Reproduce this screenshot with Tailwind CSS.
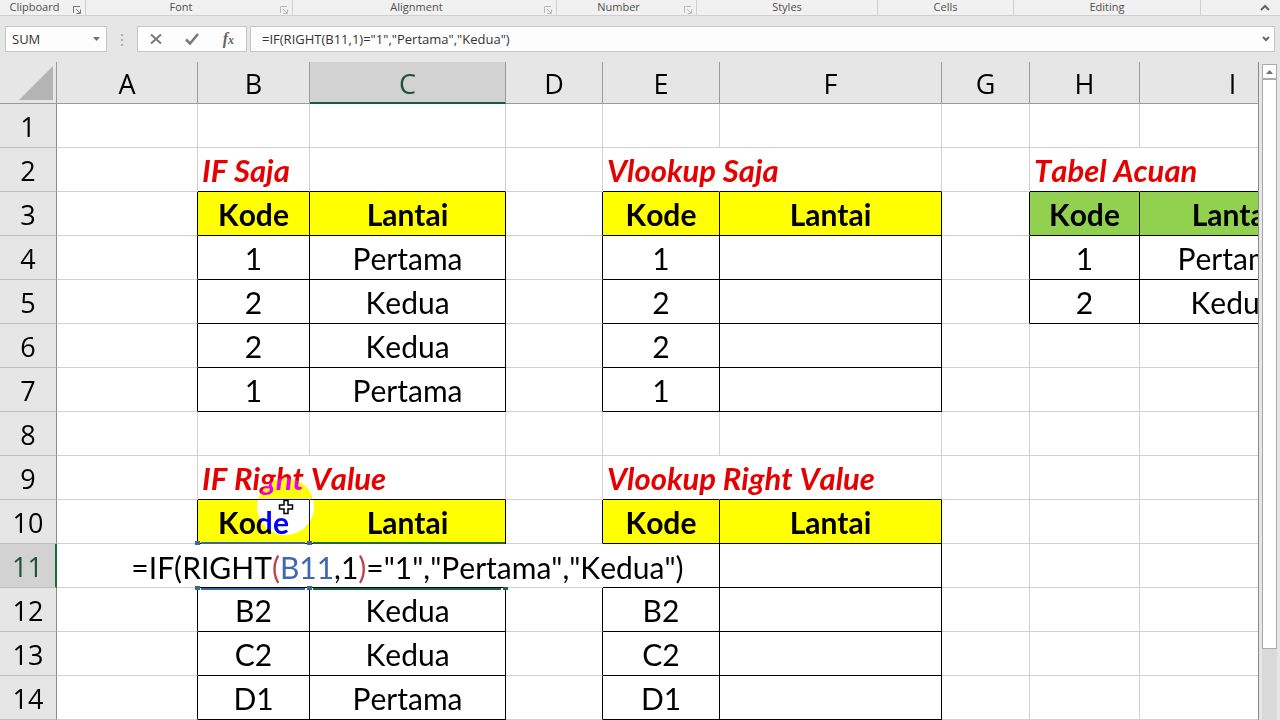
<!DOCTYPE html>
<html lang="id">
<head>
<meta charset="utf-8">
<title>Spreadsheet</title>
<script src="https://cdn.jsdelivr.net/npm/@tailwindcss/browser@4"></script>
</head>
<body class="flex h-screen flex-col overflow-hidden bg-[#e6e6e6] font-['Open_Sans',sans-serif] text-black [font-kerning:none]">

<header class="flex h-4 shrink-0 border-b border-[#d0d0d0] bg-[#f1f1f1] text-[11px] leading-[14px] text-[#505050]">
  <div class="flex w-[86px] border-r border-[#d0d0d0]"><span class="flex-1 pr-1 text-center">Clipboard</span><button aria-label="Clipboard settings" class="mt-1 w-3 text-[#777]"><svg class="size-2" viewBox="0 0 8 8" fill="none" stroke="currentColor"><path d="M.5 7V.5H7M3 3l4 4M7.500 3.500v4h-4"/></svg></button></div>
  <div class="flex w-[207px] border-r border-[#d0d0d0]"><span class="flex-1 pr-1 text-center">Font</span><button aria-label="Font settings" class="mt-1 w-3 text-[#bbb]"><svg class="size-2" viewBox="0 0 8 8" fill="none" stroke="currentColor"><path d="M.5 7V.5H7M3 3l4 4M7.500 3.500v4h-4"/></svg></button></div>
  <div class="flex w-[264px] border-r border-[#d0d0d0]"><span class="flex-1 pr-1 text-center">Alignment</span><button aria-label="Alignment settings" class="mt-1 w-3 text-[#bbb]"><svg class="size-2" viewBox="0 0 8 8" fill="none" stroke="currentColor"><path d="M.5 7V.5H7M3 3l4 4M7.500 3.500v4h-4"/></svg></button></div>
  <div class="flex w-[140px] border-r border-[#d0d0d0]"><span class="flex-1 pr-1 text-center">Number</span><button aria-label="Number settings" class="mt-1 w-3 text-[#bbb]"><svg class="size-2" viewBox="0 0 8 8" fill="none" stroke="currentColor"><path d="M.5 7V.5H7M3 3l4 4M7.500 3.500v4h-4"/></svg></button></div>
  <div class="w-[181px] border-r border-[#d0d0d0] text-center">Styles</div>
  <div class="w-[136px] border-r border-[#d0d0d0] text-center">Cells</div>
  <div class="w-[187px] border-r border-[#d0d0d0] text-center">Editing</div>
  <button aria-label="Collapse ribbon" class="mr-2.5 ml-auto text-[#666]"><svg class="h-2 w-2.5" viewBox="0 0 10 8" fill="none" stroke="currentColor" stroke-width="2"><path d="M1 6l4-4 4 4"/></svg></button>
</header>

<div class="flex h-[46px] shrink-0 items-start px-[5px] pt-2.5 text-[#333]">
  <div class="flex h-[26px] w-[102px] items-center border border-[#c6c6c6] bg-[#fdfdfd] px-1.5">
    <input aria-label="Name box" value="SUM" class="w-0 min-w-0 flex-1 text-[13px] leading-6 outline-none">
    <button aria-label="Name list"><svg class="h-1 w-[7px]" viewBox="0 0 7 4" fill="#707070"><path d="M0 0h7L3.500 4z"/></svg></button>
  </div>
  <svg class="mt-2 ml-3.5 h-3 w-0.5" viewBox="0 0 2 12" fill="#b0b0b0"><path d="M0 0h2v2H0zM0 5h2v2H0zM0 10h2v2H0z"/></svg>
  <div class="ml-3.5 flex h-[26px] w-[110px] items-center justify-between border border-[#c6c6c6] bg-[#fdfdfd] px-3 text-[#7a7a7a]">
    <button aria-label="Cancel"><svg class="size-3" viewBox="0 0 12 12" fill="none" stroke="currentColor" stroke-width="2"><path d="M1 1.500l10 9M11 1.500l-10 9"/></svg></button>
    <button aria-label="Enter"><svg class="h-3 w-3.5" viewBox="0 0 14 12" fill="none" stroke="currentColor" stroke-width="2.600"><path d="M1 6.500l4 4L13 1"/></svg></button>
    <button aria-label="Insert function" class="font-['Liberation_Serif',serif] text-base leading-5 font-bold text-[#666] italic">f<span class="text-xs">x</span></button>
  </div>
  <div class="ml-[3px] flex h-[26px] min-w-0 flex-1 items-center border border-[#c6c6c6] bg-[#fdfdfd] pr-1 pl-[11px]">
    <input aria-label="Formula bar" value='=IF(RIGHT(B11,1)="1","Pertama","Kedua")' class="w-0 min-w-0 flex-1 text-[13px] leading-6 outline-none">
    <button aria-label="Expand formula bar"><svg class="h-1.5 w-2" viewBox="0 0 8 6" fill="none" stroke="#666" stroke-width="2"><path d="M1 1l3 3 3-3"/></svg></button>
  </div>
</div>

<main class="flex min-h-0 flex-1">
  <div class="relative isolate min-w-0 flex-1 overflow-hidden border-r border-[#8a8a8a] bg-white">
    <table class="w-[1326px] table-fixed border-separate border-spacing-0 text-center">
      <colgroup>
        <col class="w-[57px]"><col class="w-[141px]"><col class="w-[112px]"><col class="w-[196px]"><col class="w-[97px]"><col class="w-[117px]"><col class="w-[222px]"><col class="w-[88px]"><col class="w-[110px]"><col class="w-[186px]">
      </colgroup>
      <thead><tr id="heads"></tr></thead>
      <tbody id="rows"></tbody>
    </table>
    <div class="pointer-events-none absolute top-[416px] left-[257px] size-[57px] rounded-full bg-[#0000ff] mix-blend-difference"></div>
    <svg class="pointer-events-none absolute top-[437px] left-[278px] size-4" viewBox="0 0 16 16" fill="white" stroke="black" stroke-width="1.500"><path d="M6 1.500h4V6h4.500v4H10v4.500H6V10H1.500V6H6z"/></svg>
  </div>
  <div class="ml-[3px] flex w-[18px] flex-col pt-0.5">
    <button aria-label="Scroll up" class="flex h-[15px] w-[15px] shrink-0 items-center justify-center border border-[#ababab] bg-white"><svg class="h-1 w-[7px]" viewBox="0 0 7 4" fill="#707070"><path d="M0 4h7L3.500 0z"/></svg></button>
    <div class="w-[15px] flex-1 bg-[#dadada]"><div class="h-[89%] border border-[#ababab] bg-white"></div></div>
  </div>
</main>

<script>
const cols = 'ABCDEFGHI';
const cells = {
  B2: 'IF Saja', E2: 'Vlookup Saja', H2: 'Tabel Acuan', B9: 'IF Right Value', E9: 'Vlookup Right Value',
  B3: 'Kode', C3: 'Lantai', E3: 'Kode', F3: 'Lantai', H3: 'Kode', I3: 'Lantai',
  B4: '1', C4: 'Pertama', B5: '2', C5: 'Kedua', B6: '2', C6: 'Kedua', B7: '1', C7: 'Pertama',
  E4: '1', E5: '2', E6: '2', E7: '1', H4: '1', I4: 'Pertama', H5: '2', I5: 'Kedua',
  B10: 'Kode', C10: 'Lantai', E10: 'Kode', F10: 'Lantai',
  B12: 'B2', C12: 'Kedua', B13: 'C2', C13: 'Kedua', B14: 'D1', C14: 'Pertama',
  E12: 'B2', E13: 'C2', E14: 'D1'
};
const editor = `<span class="absolute top-px left-1/2 z-10 -translate-x-1/2 leading-[44px] whitespace-nowrap">=IF(RIGHT<span class="text-[#c0404a]">(</span><span class="text-[#4066b4]">B11</span>,1<span class="text-[#c0404a]">)</span>="1","Pertama","Kedua")</span>
<span class="absolute -top-0.5 right-0 left-[3px] z-20 h-0.5 bg-[#1a6840]"></span>
<span class="absolute right-1 -bottom-[3px] left-[3px] z-20 h-0.5 bg-[#1a6840]"></span>
<span class="absolute -right-[3px] -bottom-[3px] z-20 h-[3px] w-[5px] bg-[#1a6840]"></span>`;
const reference = `<span class="absolute -top-0.5 right-1 left-[3px] z-20 h-0.5 bg-[#3a66a8]"></span>
<span class="absolute right-1 -bottom-[3px] left-[3px] z-20 h-0.5 bg-[#3a66a8]"></span>
<span class="absolute -top-[3px] -left-[3px] z-20 h-1 w-[5px] bg-[#3a66a8]"></span>
<span class="absolute -top-[3px] -right-[3px] z-20 h-1 w-[5px] bg-[#3a66a8]"></span>
<span class="absolute -bottom-[3px] -left-[3px] z-20 h-1 w-[5px] bg-[#3a66a8]"></span>
<span class="absolute -right-[3px] -bottom-[3px] z-20 h-1 w-[5px] bg-[#3a66a8]"></span>`;

// Columns and rows that belong to a bordered table
const boxed = (c, r) =>
  ('BCEF'.includes(c) && ((r >= 3 && r <= 7) || r >= 10)) || ('HI'.includes(c) && r >= 3 && r <= 5);
// Cells whose right grid line is covered by text running into the next cell
const open = new Set(['B9', 'E2', 'E9', 'H2', 'A11', 'B11', 'C11', 'D11']);

document.getElementById('heads').innerHTML =
  '<th class="h-[42px] border-r border-b border-[#9b9b9b] bg-[#e6e6e6] p-0 align-top"><svg class="mt-1 ml-[19px] h-[34px] w-[34px]" viewBox="0 0 34 34" fill="#b4b4b4"><path d="M34 0v34H0z"/></svg></th>' +
  [...cols].map(c => `<th scope="col" class="h-[42px] border-r px-0 pt-1 pb-0 align-top text-[27px] leading-9 font-normal ${c === 'C'
    ? 'border-b-2 border-r-[#9b9b9b] border-b-[#12603a] bg-[#d2d2d2] text-[#1c5236]'
    : 'border-b border-[#9b9b9b] bg-[#e6e6e6]'}">${c}</th>`).join('');

let html = '';
for (let r = 1; r <= 14; r++) {
  html += `<tr><th scope="row" class="h-11 border-b px-0 pt-0.5 pb-0 text-[27px] leading-[41px] font-normal ${r === 11
    ? 'border-r-2 border-b-[#bdbdbd] border-r-[#1a6840] bg-[#d2d2d2] text-[#1c5236]'
    : 'border-r border-b-[#bdbdbd] border-r-[#8a8a8a] bg-[#e6e6e6]'}">${r}</th>`;
  [...cols].forEach((c, i) => {
    const id = c + r, next = cols[i + 1] || '-';
    const right = open.has(id) ? 'border-r-transparent' : boxed(c, r) || boxed(next, r) ? 'border-r-black' : 'border-r-[#d0d0d0]';
    const bottom = boxed(c, r) || boxed(c, r + 1) ? 'border-b-black' : 'border-b-[#d0d0d0]';
    let look = 'px-0 text-[30px]';
    if (r === 2 || r === 9) look = 'pr-0 pl-1 text-left text-[31px] font-bold italic text-[#e60000]';
    else if ((r === 3 || r === 10) && boxed(c, r)) look = 'px-0 text-[30px] font-bold ' + ('HI'.includes(c) ? 'bg-[#92d050]' : 'bg-[#ffff00]');
    const body = id === 'C11' ? editor : id === 'B11' ? reference : cells[id] || '';
    html += `<td class="relative h-11 border-r border-b pt-0.5 pb-0 font-['Lato',sans-serif] leading-[41px] whitespace-nowrap ${right} ${bottom} ${look}">${body}</td>`;
  });
  html += '</tr>';
}
document.getElementById('rows').innerHTML = html;
</script>
</body>
</html>
